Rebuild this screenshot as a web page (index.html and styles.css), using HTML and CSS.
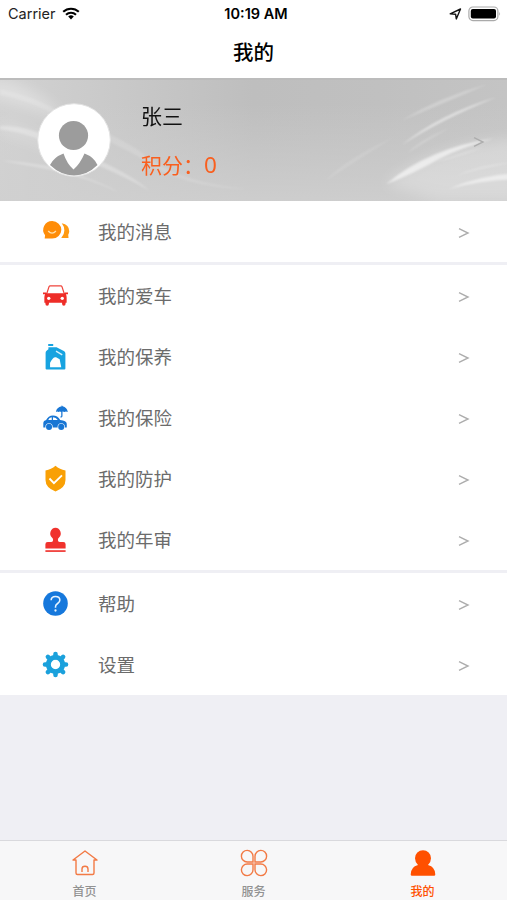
FILE: index.html
```
<!DOCTYPE html>
<html lang="zh-CN">
<head>
    <meta charset="UTF-8">
    <meta name="viewport" content="width=device-width, initial-scale=1.0">
    <title>我的</title>
    <link rel="stylesheet" href="styles.css">
</head>
<body>

<div class="app">
    <header>
        <div class="status-bar">
            <div class="status-left">
                <span>Carrier</span>
                <svg class="wifi" width="18" height="13" viewBox="0 0 18 13">
                    <path d="M1.2 4.8a11.4 11.4 0 0 1 15.6 0M4 7.7a7.4 7.4 0 0 1 10 0" fill="none" stroke="#000" stroke-width="2.1"/>
                    <path d="M6.2 9.6a4.2 4.2 0 0 1 5.6 0L9 12.5z"/>
                </svg>
            </div>
            <div class="status-time">10:19 AM</div>
            <div class="status-right">
                <svg width="13" height="12" viewBox="0 0 13 12">
                    <path d="M1.2 5.9L11.5 1 7.3 10.9 6.6 6.2z" fill="none" stroke="#111" stroke-width="1.4" stroke-linejoin="round"/>
                </svg>
                <svg width="33" height="16" viewBox="0 0 33 16">
                    <rect x=".9" y="1" width="29" height="13.6" rx="4" fill="#fff" stroke="#aaa" stroke-width="1.2"/>
                    <rect x="2.8" y="3" width="25.2" height="9.6" rx="2"/>
                    <path d="M31.2 5.8q1.6 2 0 4z" fill="#aaa"/>
                </svg>
            </div>
        </div>
        <h1>我的</h1>
    </header>

    <section class="profile">
        <svg class="profile-bg" width="507" height="122" viewBox="0 0 507 122" preserveAspectRatio="none">
            <defs>
                <linearGradient id="base" x1="0" y1="0" x2="1" y2="0">
                    <stop offset="0" stop-color="#d2d2d2"/>
                    <stop offset=".25" stop-color="#c8c8c8"/>
                    <stop offset=".5" stop-color="#bebebe"/>
                    <stop offset=".75" stop-color="#c0c0c0"/>
                    <stop offset="1" stop-color="#c4c4c4"/>
                </linearGradient>
                <linearGradient id="shade" x1="0" y1="0" x2="0" y2="1">
                    <stop offset=".2" stop-color="#d0d0d0" stop-opacity="0"/>
                    <stop offset="1" stop-color="#d0d0d0" stop-opacity=".85"/>
                </linearGradient>
                <filter id="soft" color-interpolation-filters="sRGB"><feGaussianBlur stdDeviation="1.3"/></filter>
                <filter id="softer" x="-30%" y="-50%" width="160%" height="200%" color-interpolation-filters="sRGB"><feGaussianBlur stdDeviation="7"/></filter>
            </defs>
            <rect width="507" height="122" fill="url(#base)"/>
            <rect width="507" height="122" fill="url(#shade)"/>
            <g fill="#fff" filter="url(#softer)">
                <path d="M-10 0Q30 0 65 38Q30 30-10 15z" opacity=".3"/>
                <path d="M385 105Q430 65 520 58V122H440z" opacity=".25"/>
                <path d="M0 42Q50 52 80 90Q40 62 0 54z" opacity=".2"/>
            </g>
            <g fill="#fff" filter="url(#soft)">
                <path d="M0 9Q35 16 65 35Q130 62 145 76Q180 104 250 110Q180 109 142 79Q100 57 60 38Q30 20 0 15z" opacity=".15"/>
                <path d="M0 46Q35 46 70 68Q130 93 150 112Q120 94 66 73Q32 53 0 50z" opacity=".27"/>
                <path d="M0 81Q25 82 48 87Q95 99 120 114Q90 99 48 90z" opacity=".27"/>
                <path d="M386 105Q430 68 494 59Q462 68 440 79Q412 95 386 105z" opacity=".58"/>
                <path d="M401 66Q440 34 497 17Q440 40 401 66z" opacity=".5"/>
                <path d="M401 41Q440 17 488 4Q440 25 401 41z" opacity=".25"/>
                <path d="M407 74Q420 60 450 48Q425 62 407 74z" opacity=".2"/>
                <path d="M435 83Q460 73 485 67Q460 78 435 83z" opacity=".2"/>
                <path d="M448 110Q480 96 515 94V100Q480 101 448 110z" opacity=".5"/>
                <path d="M455 97Q480 85 515 83Q480 89 455 97z" opacity=".25"/>
                <path d="M325 102Q345 80 395 57Q360 79 325 102z" opacity=".12"/>
            </g>
        </svg>
        <svg class="avatar" width="74" height="74" viewBox="0 0 74 74">
            <circle cx="37" cy="37" r="36.300" fill="#fff" stroke="#e2e2e2"/>
            <circle cx="36.500" cy="32.500" r="14.600" fill="#9c9c9c"/>
            <path d="M13 62Q17 54 26.500 50.500Q30 61 36.500 66.500Q43 61 47.500 50.500Q57 54 60.500 62Q50 72.500 37 72.500T13 62z" fill="#9c9c9c"/>
        </svg>
        <div class="profile-info">
            <div class="name">张三</div>
            <div class="points">积分：<span>0</span></div>
        </div>
        <svg class="arrow" width="12" height="12" viewBox="0 0 12 12"><path d="M1 1.700L10 6 1 10.300"/></svg>
    </section>

    <ul class="menu">
        <li>
            <svg class="icon" viewBox="0 0 24 24">
                <path d="M18 4Q25.200 5.500 25.200 11.700Q25.200 13.500 24.200 15L24.500 18.300H17.500Q20.500 15 20.500 11T18 4z" fill="#ff9a12"/>
                <path d="M8.800 2A8.800 8.400 0 0 1 8.800 18.800H1.600L2 15.500A8.800 8.400 0 0 1 8.800 2z" fill="#ff8d08"/>
                <path d="M5 11.500Q8.700 15.500 12.400 11.500" fill="none" stroke="#ffe0ad" stroke-width="1.300"/>
            </svg>
            <span>我的消息</span>
            <svg class="arrow" width="12" height="12" viewBox="0 0 12 12"><path d="M1 1.700L10 6 1 10.300"/></svg>
        </li>
    </ul>

    <ul class="menu">
        <li>
            <svg class="icon" viewBox="0 0 24 24">
                <path d="M3.700 10L5.800 3.500Q6.100 2.700 7 2.700H17Q17.900 2.700 18.200 3.500L20.300 10" fill="none" stroke="#f0443c" stroke-width="1.200"/>
                <path d="M0 9h2.800l1 .8h16.400l1-.8H24v1.800h-2Q22.700 12 22.700 14v5h-1v1q0 1.800-1.700 1.800t-1.700-1.800v-1H5.700v1q0 1.800-1.700 1.800T2.300 20v-1h-1v-5q0-2 .7-3.200H0z" fill="#ee2d28"/>
                <circle cx="5.500" cy="14.700" r="1.600" fill="#fff"/><circle cx="18.500" cy="14.700" r="1.600" fill="#fff"/>
            </svg>
            <span>我的爱车</span>
            <svg class="arrow" width="12" height="12" viewBox="0 0 12 12"><path d="M1 1.700L10 6 1 10.300"/></svg>
        </li>
        <li>
            <svg class="icon" viewBox="0 0 24 24">
                <path d="M5 0h4.800v1.900H5zM5.200 3H13l7 3.700q1.500.8 1.500 2.300V23.500q0 1-1 1H3.500q-1 0-1-1V8.500Q2.500 7 3.700 6.200L5.200 5z" fill="#17a3e0"/>
                <path d="M12.500 6.800l6 3.700" stroke="#d8f2fc" stroke-width="1.300"/>
                <path d="M6.800 22.300V18Q9.500 12 12.500 12.700L16 14.700 17.500 22.300z" fill="#fff"/>
            </svg>
            <span>我的保养</span>
            <svg class="arrow" width="12" height="12" viewBox="0 0 12 12"><path d="M1 1.700L10 6 1 10.300"/></svg>
        </li>
        <li>
            <svg class="icon" viewBox="0 0 24 24" fill="#1876d4">
                <path d="M12.400 6.800Q13 2.300 18 1.300L18 0l.8 1.300Q23 2.300 23.800 6.800Q22 5.800 20.500 6.800Q19 5.800 17.600 6.800Q16 5.800 15 6.800Q13.700 5.900 12.400 6.800z"/>
                <path d="M18.100 6v4.500q0 1-1.300.8" fill="none" stroke="#1876d4" stroke-width="1.200"/>
                <path d="M.3 21.500V17Q.3 15 3 14.500Q5 10 9.500 10Q14 10 16.500 14.300Q22.500 14.800 22.800 18v3.500z"/>
                <path d="M5 14.500Q6 11.800 8.400 11.700v2.800zM9.600 11.700Q12.500 11.900 14.200 14.500H9.600z" fill="#fff"/>
                <circle cx="5.800" cy="21" r="3.500" fill="#fff"/><circle cx="17.500" cy="21" r="3.500" fill="#fff"/>
                <circle cx="5.800" cy="21" r="2.900"/><circle cx="17.500" cy="21" r="2.900"/>
            </svg>
            <span>我的保险</span>
            <svg class="arrow" width="12" height="12" viewBox="0 0 12 12"><path d="M1 1.700L10 6 1 10.300"/></svg>
        </li>
        <li>
            <svg class="icon" viewBox="0 0 24 24">
                <path d="M12-.2Q16 3.500 21.600 4.300V13.500Q21.600 21 12 24.400Q2.400 21 2.400 13.500V4.300Q8 3.500 12-.2z" fill="#f9a005"/>
                <path d="M6.200 12l4.300 4.500 7.700-7.500" fill="none" stroke="#fff" stroke-width="1.800"/>
            </svg>
            <span>我的防护</span>
            <svg class="arrow" width="12" height="12" viewBox="0 0 12 12"><path d="M1 1.700L10 6 1 10.300"/></svg>
        </li>
        <li>
            <svg class="icon" viewBox="0 0 24 24" fill="#f0322d">
                <path d="M12 .6A5.500 5.500 0 0 1 15.400 10Q14.300 10.800 14.300 12.500Q14.300 14.300 16 14.300H19.500Q21.700 14.300 21.700 16.500V20.700H2.300V16.500Q2.300 14.300 4.500 14.300H8Q9.700 14.300 9.700 12.500Q9.700 10.800 8.600 10A5.500 5.500 0 0 1 12 .6z"/>
                <path d="M2.300 22.300h19.400v1.600H2.300z"/>
            </svg>
            <span>我的年审</span>
            <svg class="arrow" width="12" height="12" viewBox="0 0 12 12"><path d="M1 1.700L10 6 1 10.300"/></svg>
        </li>
    </ul>

    <ul class="menu">
        <li>
            <svg class="icon" viewBox="0 0 24 24">
                <circle cx="12" cy="12" r="11.800" fill="#1678dc"/>
                <path d="M7.800 8.800Q7.900 5.200 12 5.200T16.200 8.600Q16.200 10.500 14 12T12 15.200V16" fill="none" stroke="#e8f4ff" stroke-width="1.500"/>
                <circle cx="12" cy="18.700" r="1.100" fill="#e8f4ff"/>
            </svg>
            <span>帮助</span>
            <svg class="arrow" width="12" height="12" viewBox="0 0 12 12"><path d="M1 1.700L10 6 1 10.300"/></svg>
        </li>
        <li>
            <svg class="icon" viewBox="0 0 24 24" stroke="#1ba1dc" fill="none">
                <circle cx="12" cy="12" r="6.900" stroke-width="4.800"/>
                <path d="M12 1.900v3M12 19.100v3M1.900 12h3M19.100 12h3M4.700 4.700l1.900 1.900M17.400 17.400l1.900 1.900M4.700 19.300l1.900-1.900M17.400 6.600l1.900-1.900" stroke-width="4.400" stroke-linecap="round"/>
            </svg>
            <span>设置</span>
            <svg class="arrow" width="12" height="12" viewBox="0 0 12 12"><path d="M1 1.700L10 6 1 10.300"/></svg>
        </li>
    </ul>

    <nav class="tab-bar">
        <a class="tab">
            <svg width="28" height="28" viewBox="0 0 28 28" fill="none" stroke="#f27a45" stroke-width="1.400" stroke-linejoin="round">
                <path d="M5 11H2L14 2l12 9h-3v13q0 1.500-1.500 1.500h-15Q5 25.500 5 24z"/>
                <path d="M11 23v-3q0-2.700 3-2.700t3 2.700v3"/>
            </svg>
            <span>首页</span>
        </a>
        <a class="tab">
            <svg width="28" height="28" viewBox="0 0 28 28" fill="none" stroke="#f27a45" stroke-width="1.400">
                <path d="M13 13H7.300A5.800 5.800 0 1 1 13 7.300zM15 13h5.700a5.800 5.800 0 1 0-5.700-5.700zM13 15H7.300a5.800 5.800 0 1 0 5.700 5.700zM15 15h5.700a5.800 5.800 0 1 1-5.700 5.700z"/>
            </svg>
            <span>服务</span>
        </a>
        <a class="tab active">
            <svg width="28" height="28" viewBox="0 0 28 28" fill="#ff5000">
                <path d="M14 1.200A8 8 0 0 1 22 9.200Q22 13 19 16Q26.300 18 26.300 25.500Q26.300 26.800 25 26.800H3Q1.700 26.800 1.700 25.500Q1.700 18 9 16Q6 13 6 9.200A8 8 0 0 1 14 1.200z"/>
            </svg>
            <span>我的</span>
        </a>
    </nav>
</div>

</body>
</html>
```

FILE: styles.css
```
* {
    box-sizing: border-box;
}
body {
    margin: 0;
    font-family: Inter, "Noto Sans CJK SC", sans-serif;
    background-color: #efeff4;
}
.app {
    display: flex;
    flex-direction: column;
    height: 900px;
    overflow: hidden;
}
header {
    height: 80px;
    background-color: #ffffff;
    border-bottom: 2px solid #bcbcbc;
}
.status-bar {
    display: grid;
    grid-template-columns: 1fr auto 1fr;
    align-items: center;
    height: 27px;
    padding: 0 6px 0 8px;
    font-size: 14.5px;
    color: #222222;
}
.status-left {
    display: flex;
    align-items: center;
    gap: 6px;
}
.status-time {
    padding-left: 3px;
    font-size: 14.5px;
    font-weight: 600;
    color: #000000;
}
.status-right {
    display: flex;
    align-items: center;
    justify-content: flex-end;
    gap: 6px;
}
h1 {
    margin: 0;
    padding-top: 1px;
    font-size: 20.5px;
    line-height: 50px;
    font-weight: 500;
    text-align: center;
    color: #000000;
}
.profile {
    position: relative;
    display: flex;
    align-items: center;
    height: 121px;
    padding: 0 22px 0 37px;
}
/* light streaks behind the profile content */
.profile-bg {
    position: absolute;
    top: 0;
    left: 0;
    width: 100%;
    height: 100%;
}
.avatar,
.profile-info,
.profile .arrow {
    position: relative;
}
.avatar {
    margin-bottom: 1px;
}
.profile-info {
    flex-grow: 1;
    margin-left: 30px;
    padding-bottom: 2px;
    font-family: "Noto Sans CJK SC", sans-serif;
    font-size: 21px;
    line-height: 49px;
}
.name {
    color: #111111;
}
.points {
    color: #f95f1e;
}
.points span {
    font-family: "Noto Sans", sans-serif;
    font-size: 22.5px;
    line-height: 1;
}
.menu {
    list-style: none;
    margin: 0 0 3px;
    padding: 0;
    background-color: #ffffff;
}
.menu li {
    display: flex;
    align-items: center;
    height: 61px;
    padding: 0 37px 0 43px;
    font-size: 18.5px;
    color: #6b6b6b;
}
.menu span {
    flex-grow: 1;
    margin-left: 30px;
    padding-bottom: 2px;
}
.icon {
    width: 25px;
    height: 25px;
    overflow: visible;
}
.arrow {
    flex-shrink: 0;
    margin-top: 3px;
    fill: none;
    stroke: #adadad;
    stroke-width: 1.4;
}
.tab-bar {
    display: flex;
    height: 60px;
    margin-top: auto;
    background-color: #f7f7f8;
    border-top: 1px solid #d9d9dd;
}
.tab {
    flex: 1;
    display: flex;
    flex-direction: column;
    align-items: center;
    padding-top: 8px;
    font-size: 12px;
    line-height: 18px;
    font-weight: 500;
    color: #929292;
}
.tab svg {
    flex-shrink: 0;
}
.tab span {
    margin-top: 6px;
}
.tab.active {
    color: #ff5000;
}
```
